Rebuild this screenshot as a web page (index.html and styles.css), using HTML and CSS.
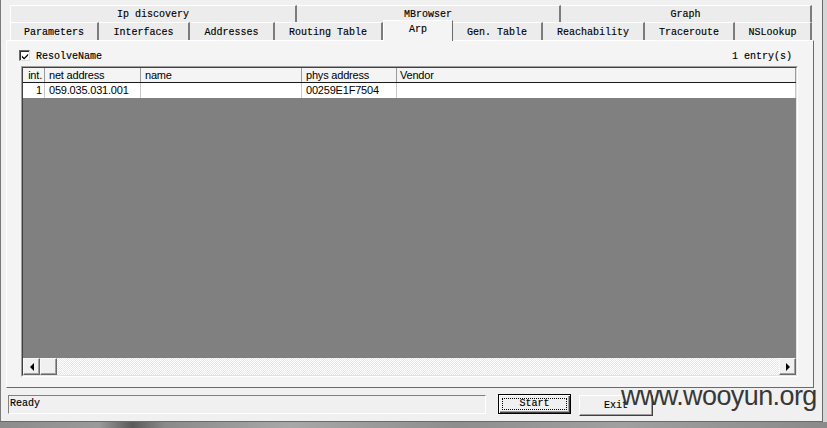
FILE: index.html
```html
<!DOCTYPE html>
<html>
<head>
<meta charset="utf-8">
<link rel="stylesheet" href="styles.css">
</head>
<body>
<div class="win">
  <div class="tabs">
    <div class="trow row1">
      <div class="tab w-ip">Ip discovery</div>
      <div class="tab w-mb">MBrowser</div>
      <div class="tab w-gr">Graph</div>
    </div>
    <div class="trow row2">
      <div class="tab w-par">Parameters</div>
      <div class="tab w-int">Interfaces</div>
      <div class="tab w-adr">Addresses</div>
      <div class="tab w-rt">Routing Table</div>
      <div class="tab w-arp sel">Arp</div>
      <div class="tab w-gen">Gen. Table</div>
      <div class="tab w-rea">Reachability</div>
      <div class="tab w-tr">Traceroute</div>
      <div class="tab w-ns">NSLookup</div>
    </div>
  </div>
  <div class="panel">
    <div class="opts">
      <label class="chk">
        <span class="box"><svg width="9" height="9" viewBox="0 0 9 9"><path d="M1 3.5 L3.5 6 L8 1.5 L8 3.5 L3.5 8 L1 5.5 Z" fill="#000"/></svg></span>
        <span>ResolveName</span>
      </label>
      <span class="count">1 entry(s)</span>
    </div>
    <div class="list">
      <div class="list-in">
        <div class="lh">
          <div class="c c0 ra">int.</div>
          <div class="c c1">net address</div>
          <div class="c c2">name</div>
          <div class="c c3">phys address</div>
          <div class="c c4">Vendor</div>
        </div>
        <div class="lr">
          <div class="c c0 ra">1</div>
          <div class="c c1">059.035.031.001</div>
          <div class="c c2"></div>
          <div class="c c3">00259E1F7504</div>
          <div class="c c4"></div>
        </div>
        <div class="lempty"></div>
        <div class="hs">
          <div class="sb"><span class="arr-l"></span></div>
          <div class="sb"></div>
          <div class="track"></div>
          <div class="sb"><span class="arr-r"></span></div>
        </div>
      </div>
    </div>
  </div>
  <div class="bot">
    <div class="status">Ready</div>
    <button class="btn def"><span class="focus">Start</span></button>
    <button class="btn exit">Exit</button>
  </div>
</div>
<div class="wm">www.wooyun.org</div>
</body>
</html>
```
FILE: styles.css
```css
html, body {
  margin: 0;
  padding: 0;
}
body {
  width: 827px;
  height: 428px;
  overflow: hidden;
  position: relative;
  background:
    linear-gradient(to right, #8c8c8c 0, #9a9a9a 12%, #5a5a5a 16%, #8a8a8a 20%, #a8a8a8 35%, #8e8e8e 55%, #a0a0a0 75%, #8a8a8a 100%) left bottom / 100% 6px no-repeat,
    #d6d6d6;
  font-family: "Liberation Mono", monospace;
}
.win {
  width: 823px;
  height: 422px;
  box-sizing: border-box;
  background: #f0f0f0;
  border-left: 1px solid #7a7a7a;
  border-right: 1px solid #6a6a6a;
  border-bottom: 1px solid #6a6a6a;
}
.tabs {
  margin-left: 9px;
  padding-top: 5px;
  width: 802px;
}
.trow {
  display: flex;
}
.row1 { height: 17px; }
.row2 { height: 18px; }
.tab {
  box-sizing: border-box;
  height: 100%;
  background: #ececec;
  border-top: 1px solid #fff;
  border-right: 2px solid #7c7c7c;
  display: flex;
  align-items: center;
  justify-content: center;
  font: 10px/12px "Liberation Mono", monospace;
  -webkit-text-stroke: 0.15px #000;
  color: #000;
  white-space: nowrap;
  padding-top: 2px;
}
.tab:first-child { border-left: 1px solid #fff; }
.w-ip { width: 287px; }
.w-mb { width: 264px; }
.w-gr { width: 251px; }
.w-par { width: 89px; }
.w-int { width: 91px; }
.w-adr { width: 85px; }
.w-rt { width: 108px; }
.w-arp { width: 70px; }
.w-gen { width: 90px; }
.w-rea { width: 102px; }
.w-tr { width: 90px; }
.w-ns { width: 77px; }
.tab.sel {
  background: #f4f4f4;
  margin-top: -2px;
  height: 21px;
  margin-bottom: -1px;
  padding-top: 0;
  padding-bottom: 2px;
  border-left: 1px solid #fff;
  border-right: 1px solid #6a6a6a;
  position: relative;
  z-index: 2;
}
.panel {
  margin-left: 5px;
  width: 808px;
  height: 348px;
  box-sizing: border-box;
  border: 1px solid;
  border-color: #fff #6a6a6a #6a6a6a #fff;
  background: #f4f4f4;
  padding: 9px 15px 0 14px;
}
.opts {
  display: flex;
  justify-content: space-between;
  height: 16px;
  margin-left: -2px;
  margin-right: 6px;
  font: 10px/12px "Liberation Mono", monospace;
  -webkit-text-stroke: 0.15px #000;
}
.chk {
  display: flex;
  align-items: flex-start;
  gap: 6px;
}
.chk span:last-child { padding-top: 1px; }
.box {
  width: 11px;
  height: 11px;
  box-sizing: border-box;
  background: #fff;
  border: 1px solid;
  border-color: #6a6a6a #e0e0e0 #e0e0e0 #6a6a6a;
  box-shadow: inset 1px 1px 0 #303030;
  display: flex;
  align-items: center;
  justify-content: center;
  -webkit-text-stroke: 0;
}
.box svg { display: block; margin: 1px 0 0 1px; }
.count { padding-top: 1px; }
.list {
  border: 1px solid;
  border-color: #a0a0a0 #fff #fff #a0a0a0;
}
.list-in {
  border: 1px solid;
  border-color: #404040 #e3e3e3 #e3e3e3 #404040;
  background: #808080;
}
.lh, .lr {
  display: flex;
}
.lh {
  height: 15px;
  box-sizing: border-box;
  background: #f4f4f4;
  border-bottom: 1px solid #1a1a1a;
}
.lr {
  height: 15px;
  background: #fff;
}
.c {
  box-sizing: border-box;
  border-right: 1px solid #9a9a9a;
  padding-left: 4px;
  font: 11px/14px "Liberation Sans", Arial, sans-serif;
  letter-spacing: -0.2px;
  color: #000;
  white-space: nowrap;
  overflow: hidden;
}
.lr .c { border-right-color: #c8c8c8; }
.c0 { width: 22px; }
.c1 { width: 96px; }
.c2 { width: 161px; }
.c3 { width: 95px; }
.c4 { flex: 1; padding-left: 3px; }
.ra { text-align: right; padding-left: 0; padding-right: 2px; }
.lempty { height: 260px; }
.hs {
  display: flex;
  height: 17px;
  background: repeating-conic-gradient(#ffffff 0 25%, #e6e6e6 0 50%) 0 0 / 2px 2px;
}
.sb {
  width: 17px;
  height: 17px;
  box-sizing: border-box;
  background: #f0f0f0;
  border: 1px solid;
  border-color: #f8f8f8 #696969 #696969 #f8f8f8;
  box-shadow: inset -1px -1px 0 #a0a0a0;
  display: flex;
  align-items: center;
  justify-content: center;
}
.track { flex: 1; }
.arr-l {
  width: 0;
  height: 0;
  border-top: 4px solid transparent;
  border-bottom: 4px solid transparent;
  border-right: 4px solid #000;
}
.arr-r {
  width: 0;
  height: 0;
  border-top: 4px solid transparent;
  border-bottom: 4px solid transparent;
  border-left: 4px solid #000;
}
.bot {
  display: flex;
  align-items: flex-start;
  padding-left: 7px;
  margin-top: 6px;
}
.status {
  width: 478px;
  height: 19px;
  margin-top: 1px;
  box-sizing: border-box;
  border: 1px solid;
  border-color: #808080 #fff #fff #808080;
  font: 10px/16px "Liberation Mono", monospace;
  -webkit-text-stroke: 0.15px #000;
  padding-left: 1px;
}
.btn {
  box-sizing: border-box;
  padding: 0;
  margin: 0;
  font: 10px/12px "Liberation Mono", monospace;
  -webkit-text-stroke: 0.15px #000;
  color: #000;
  background: #f0f0f0;
  border: 1px solid;
  border-color: #fff #404040 #404040 #fff;
  box-shadow: inset -1px -1px 0 #a0a0a0;
}
.btn.def {
  margin-left: 12px;
  width: 73px;
  height: 20px;
  border: 1px solid #000;
  box-shadow: inset 1px 1px 0 #fff, inset -1px -1px 0 #404040, inset -2px -2px 0 #a0a0a0;
  display: flex;
  padding: 3px;
}
.focus {
  flex: 1;
  border: 1px dotted #000;
  display: flex;
  align-items: center;
  justify-content: center;
}
.btn.exit {
  margin-left: 8px;
  margin-top: 1px;
  width: 74px;
  height: 21px;
}
.wm {
  position: absolute;
  left: 621px;
  top: 381px;
  font: 27px/31px "Liberation Sans", Arial, sans-serif;
  letter-spacing: -0.6px;
  color: #383838;
}
```
